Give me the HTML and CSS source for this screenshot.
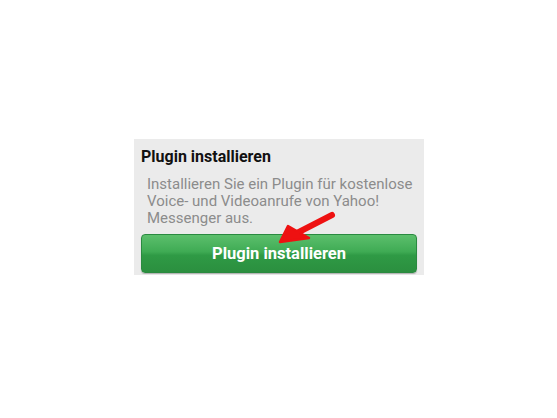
FILE: index.html
```html
<!DOCTYPE html>
<html lang="de">
<head>
    <meta charset="UTF-8">
    <meta name="viewport" content="width=device-width, initial-scale=1.0">
    <title>Plugin installieren</title>
    <link rel="stylesheet" href="styles.css">
</head>
<body>
    <div class="panel">
        <h2>Plugin installieren</h2>
        <p class="desc">Installieren Sie ein Plugin für kostenlose Voice- und Videoanrufe von Yahoo! Messenger aus.</p>
        <div class="btn-wrap">
            <button type="button" class="install-btn">Plugin installieren</button>
            <svg class="arrow" width="62" height="36" viewBox="0 0 62 36">
                <path d="M57 5 L20 24" stroke="#ee1111" stroke-width="6" stroke-linecap="round" fill="none"/>
                <path d="M5 32 L13 16 L34 28 Z" fill="#ee1111" stroke="#ee1111" stroke-width="2.5" stroke-linejoin="round"/>
            </svg>
        </div>
    </div>
</body>
</html>
```

FILE: styles.css
```css
body {
    margin: 0;
    padding: 0;
    background: #ffffff;
    font-family: Roboto, "Noto Sans", sans-serif;
}
.panel {
    width: 290px;
    margin: 139px 0 0 134px;
    padding: 8px 8px 2px 7px;
    background: #ebebeb;
    box-sizing: border-box;
}
h2 {
    margin: 0 0 9px 0;
    font-size: 16px;
    font-weight: bold;
    color: #111;
    line-height: 20px;
}
.desc {
    margin: 0 0 7px 6px;
    font-size: 15px;
    line-height: 17px;
    color: #8c8c8c;
}
.btn-wrap {
    position: relative;
}
.install-btn {
    display: block;
    width: 276px;
    height: 39px;
    border: 1px solid #2a8a40;
    border-radius: 4px;
    background: linear-gradient(#5cbf6c 0%, #3fab54 45%, #2f9a45 55%, #2b8f3f 100%);
    color: #fff;
    font-family: Roboto, "Noto Sans", sans-serif;
    font-size: 16.5px;
    font-weight: bold;
    cursor: pointer;
    box-shadow: 0 1px 1px rgba(0, 0, 0, 0.25);
}
.arrow {
    position: absolute;
    left: 134px;
    top: -24px;
}
```
